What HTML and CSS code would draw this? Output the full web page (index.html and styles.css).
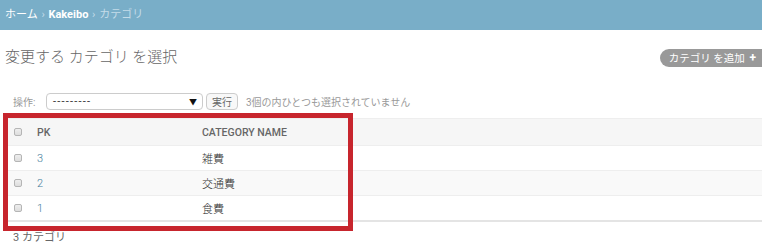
FILE: index.html
```html
<!DOCTYPE html>
<html lang="ja">
<head>
    <meta charset="UTF-8">
    <title>変更する カテゴリ を選択</title>
    <link rel="stylesheet" href="styles.css">
</head>
<body>

    <!-- Breadcrumbs -->
    <div class="breadcrumbs">
        <a href="#" class="crumb-home">ホーム</a>
        <span class="sep">›</span>
        <a href="#" class="crumb-app">Kakeibo</a>
        <span class="sep">›</span>
        <span class="crumb-current">カテゴリ</span>
    </div>

    <div class="content">
        <div class="title-row">
            <h1>変更する カテゴリ を選択</h1>
            <a href="#" class="addlink">カテゴリ を追加 <span class="plus">+</span></a>
        </div>

        <!-- Actions -->
        <div class="actions">
            <label class="actions-label">操作:</label>
            <div class="fake-select">
                <span class="dashes">---------</span>
                <span class="arrow">▼</span>
            </div>
            <button class="btn-go">実行</button>
            <span class="action-counter">3個の内ひとつも選択されていません</span>
        </div>

        <!-- Result list -->
        <table class="result-list">
            <colgroup>
                <col class="col-check">
                <col class="col-pk">
                <col class="col-name">
            </colgroup>
            <thead>
                <tr>
                    <th><span class="checkbox"></span></th>
                    <th>PK</th>
                    <th>Category name</th>
                </tr>
            </thead>
            <tbody>
                <tr>
                    <td><span class="checkbox"></span></td>
                    <td><a href="#">3</a></td>
                    <td>雑費</td>
                </tr>
                <tr class="alt">
                    <td><span class="checkbox"></span></td>
                    <td><a href="#">2</a></td>
                    <td>交通費</td>
                </tr>
                <tr>
                    <td><span class="checkbox"></span></td>
                    <td><a href="#">1</a></td>
                    <td>食費</td>
                </tr>
            </tbody>
        </table>

        <p class="paginator">3 カテゴリ</p>

        <!-- Highlight annotation over the table -->
        <div class="highlight"></div>
    </div>

</body>
</html>
```

FILE: styles.css
```css
body {
    margin: 0;
    font-family: Roboto, "Noto Sans CJK JP", sans-serif;
    font-size: 11px;
    color: #333;
    background: #fff;
    overflow: hidden;
}

a {
    color: #447e9b;
    text-decoration: none;
}

/* Breadcrumbs */
.breadcrumbs {
    background: #79aec8;
    height: 30px;
    line-height: 30px;
    padding-left: 5px;
    font-size: 11px;
    color: #c4dce8;
}

.breadcrumbs a {
    color: #fff;
}

.breadcrumbs .crumb-app {
    font-weight: bold;
}

.breadcrumbs .sep {
    margin: 0 1px;
}

/* Content */
.content {
    position: relative;
}

.title-row {
    display: flex;
    justify-content: space-between;
    align-items: center;
    padding-top: 16px;
    height: 22px;
}

h1 {
    margin: 0;
    padding-left: 5px;
    font-size: 15px;
    font-weight: 300;
    color: #666;
    line-height: 22px;
}

.addlink {
    background: #999;
    color: #fff;
    border-radius: 10px 0 0 10px;
    height: 18px;
    line-height: 18px;
    padding: 0 6px 0 9px;
    font-size: 10.5px;
    white-space: nowrap;
    margin-top: 2px;
}

.addlink .plus {
    font-weight: bold;
    font-size: 12px;
    margin-left: 2px;
}

/* Actions */
.actions {
    display: flex;
    align-items: center;
    margin-top: 24px;
    padding-left: 13px;
    height: 18px;
    color: #999;
}

.actions-label {
    font-size: 10px;
    width: 33px;
}

.fake-select {
    display: flex;
    justify-content: space-between;
    align-items: center;
    box-sizing: border-box;
    width: 157px;
    height: 17px;
    border: 1px solid #ccc;
    border-radius: 4px;
    padding: 0 5px 0 6px;
    color: #333;
    font-size: 11px;
}

.fake-select .dashes {
    letter-spacing: 1.2px;
}

.fake-select .arrow {
    font-size: 8px;
    color: #111;
}

.btn-go {
    box-sizing: border-box;
    height: 17px;
    margin-left: 3px;
    padding: 0 5px;
    border: 1px solid #ccc;
    border-radius: 4px;
    background: #f8f8f8;
    color: #666;
    font-family: inherit;
    font-size: 10px;
}

.action-counter {
    margin-left: 8px;
    font-size: 10px;
}

/* Result list */
.result-list {
    margin-top: 8px;
    margin-left: 8px;
    width: 754px;
    border-collapse: collapse;
    table-layout: fixed;
}

.col-check { width: 22px; }
.col-pk { width: 165px; }

.result-list th {
    background: #f6f6f6;
    border-top: 1px solid #eee;
    border-bottom: 1px solid #eee;
    height: 26px;
    padding: 0 0 0 7px;
    text-align: left;
    text-transform: uppercase;
    color: #666;
    font-size: 10.5px;
    font-weight: 500;
}

.result-list td {
    height: 24px;
    padding: 0 0 0 7px;
    border-bottom: 1px solid #eee;
    font-size: 11px;
    font-weight: 300;
}

.result-list th:first-child,
.result-list td:first-child {
    padding-left: 6px;
}

.result-list tbody tr:last-child td {
    border-bottom: 2px solid #e4e4e4;
}

.result-list tr.alt td {
    background: #f9f9f9;
}

.checkbox {
    display: block;
    width: 6px;
    height: 6px;
    border: 1px solid #b5b5b5;
    border-radius: 2px;
    background: linear-gradient(#eee, #ddd);
}

.paginator {
    margin: 6px 0 0 13px;
    color: #666;
    font-size: 11px;
}

/* Red annotation box */
.highlight {
    position: absolute;
    left: 3px;
    top: 83px;
    width: 350px;
    height: 118px;
    box-sizing: border-box;
    border: 5px solid #c7252d;
}
```
